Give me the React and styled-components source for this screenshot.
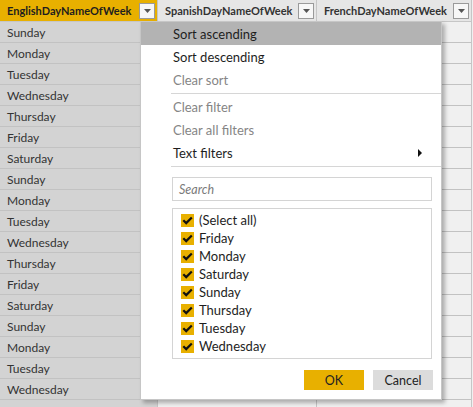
import React from "react";
import styled, { createGlobalStyle } from "styled-components";

const Global = createGlobalStyle`
  html, body { margin: 0; padding: 0; }
  body {
    width: 473px; height: 407px; overflow: hidden;
    background: #f0f0f0;
    font-family: "Lato", "Open Sans", sans-serif;
  }
`;

const Page = styled.div`
  position: relative;
  width: 473px;
  height: 407px;
  overflow: hidden;
  background: #f0f0f0;
`;

const Grid = styled.div`
  display: grid;
  grid-template-columns: 158px 159px 155px;
`;

const Column = styled.div`
  display: flex;
  flex-direction: column;
  border-right: 1px solid #c6c6c6;
  background: ${(p) => (p.$selected ? "#d3d3d3" : "#f0f0f0")};
  box-sizing: border-box;
`;

const Header = styled.div`
  height: 22px;
  box-sizing: border-box;
  display: flex;
  align-items: center;
  justify-content: space-between;
  padding: 0 2px 0 7px;
  background: ${(p) => (p.$selected ? "#e8b000" : "#e6e6e6")};
  border-bottom: 1px solid #c6c6c6;
  font-size: 11px;
  font-weight: 700;
  color: ${(p) => (p.$selected ? "#1e1e1e" : "#333")};
  white-space: nowrap;
`;

const DropButton = styled.div`
  width: 16px;
  height: 16px;
  box-sizing: border-box;
  background: #f7f7f7;
  border: 1px solid #9a9a9a;
  display: flex;
  align-items: center;
  justify-content: center;
  flex: none;
`;

const Cell = styled.div`
  height: 21px;
  box-sizing: border-box;
  border-bottom: 1px solid #c2c2c2;
  display: flex;
  align-items: center;
  padding-left: 7px;
  font-size: 12px;
  color: #333;
`;

const Menu = styled.div`
  position: absolute;
  left: 140px;
  top: 21px;
  width: 302px;
  height: 379px;
  box-sizing: border-box;
  background: #fff;
  border: 1px solid #c6c6c6;
  box-shadow: 3px 3px 4px rgba(0, 0, 0, 0.28);
  display: flex;
  flex-direction: column;
`;

const Item = styled.div`
  height: 23px;
  flex: none;
  display: flex;
  align-items: center;
  justify-content: space-between;
  padding: 0 19px 0 32px;
  font-size: 13px;
  color: ${(p) => (p.$disabled ? "#858585" : "#1e1e1e")};
  background: ${(p) => (p.$hover ? "#b3b3b3" : "transparent")};
`;

const Separator = styled.div`
  height: 1px;
  flex: none;
  margin: 2px 0 1px 30px;
  background: #d6d6d6;
`;

const Search = styled.div`
  margin: 9px 9px 0 31px;
  height: 24px;
  box-sizing: border-box;
  border: 1px solid #d4d4d4;
  display: flex;
  align-items: center;
  padding-left: 6px;
  font-size: 12.5px;
  font-style: italic;
  color: #7a7a7a;
`;

const List = styled.div`
  margin: 7px 9px 0 31px;
  height: 151px;
  box-sizing: border-box;
  border: 1px solid #d4d4d4;
  padding: 2px 0 0 8px;
  display: flex;
  flex-direction: column;
`;

const Option = styled.div`
  height: 18px;
  display: flex;
  align-items: center;
  gap: 5px;
  font-size: 13px;
  color: #1e1e1e;
`;

const Box = styled.div`
  width: 13px;
  height: 13px;
  background: #e8b000;
  display: flex;
  align-items: center;
  justify-content: center;
  flex: none;
`;

const Buttons = styled.div`
  margin: 11px 8px 0 0;
  display: flex;
  justify-content: flex-end;
  gap: 9px;
`;

const Button = styled.div`
  width: 60px;
  height: 20px;
  display: flex;
  align-items: center;
  justify-content: center;
  font-size: 12.5px;
  color: #222;
  background: ${(p) => (p.$primary ? "#e8b000" : "#dcdcdc")};
`;

const Arrow = () => (
  <svg width="7" height="4" viewBox="0 0 7 4">
    <path d="M0 0H7L3.5 4Z" fill="#555" />
  </svg>
);

const Check = () => (
  <svg width="11" height="9" viewBox="0 0 11 9">
    <path d="M1.3 4.3L4.2 7.1L9.8 1.5" fill="none" stroke="#111" strokeWidth="2.2" />
  </svg>
);

const RightTri = () => (
  <svg width="4" height="8" viewBox="0 0 4 8">
    <path d="M0 0L4 4L0 8Z" fill="#111" />
  </svg>
);

const days = [
  "Sunday", "Monday", "Tuesday", "Wednesday", "Thursday", "Friday", "Saturday",
  "Sunday", "Monday", "Tuesday", "Wednesday", "Thursday", "Friday", "Saturday",
  "Sunday", "Monday", "Tuesday", "Wednesday", "",
];

const options = ["(Select all)", "Friday", "Monday", "Saturday", "Sunday", "Thursday", "Tuesday", "Wednesday"];

const columns = [
  { name: "EnglishDayNameOfWeek", selected: true, values: days },
  { name: "SpanishDayNameOfWeek", values: days.map(() => "") },
  { name: "FrenchDayNameOfWeek", values: days.map(() => "") },
];

export default function App() {
  return (
    <Page>
      <Global />
      <Grid>
        {columns.map((c) => (
          <Column key={c.name} $selected={c.selected}>
            <Header $selected={c.selected}>
              <span>{c.name}</span>
              <DropButton>
                <Arrow />
              </DropButton>
            </Header>
            {c.values.map((v, i) => (
              <Cell key={i}>{v}</Cell>
            ))}
          </Column>
        ))}
      </Grid>
      <Menu>
        <Item $hover>Sort ascending</Item>
        <Item>Sort descending</Item>
        <Item $disabled>Clear sort</Item>
        <Separator />
        <Item $disabled>Clear filter</Item>
        <Item $disabled>Clear all filters</Item>
        <Item>
          <span>Text filters</span>
          <RightTri />
        </Item>
        <Separator />
        <Search>Search</Search>
        <List>
          {options.map((o) => (
            <Option key={o}>
              <Box>
                <Check />
              </Box>
              <span>{o}</span>
            </Option>
          ))}
        </List>
        <Buttons>
          <Button $primary>OK</Button>
          <Button>Cancel</Button>
        </Buttons>
      </Menu>
    </Page>
  );
}
